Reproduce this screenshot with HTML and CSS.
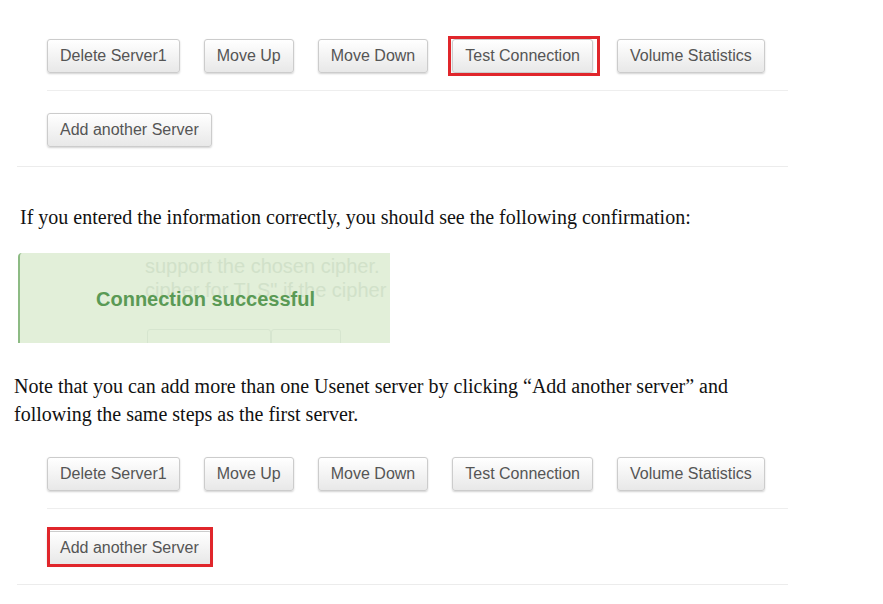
FILE: index.html
```html
<!DOCTYPE html>
<html lang="en">
<head>
    <meta charset="UTF-8">
    <meta name="viewport" content="width=device-width, initial-scale=1.0">
    <title>Add a Usenet server</title>
    <link rel="stylesheet" href="styles.css">
</head>
<body>
    <div class="server-form first">
        <div class="button-row">
            <button class="btn">Delete Server1</button>
            <button class="btn">Move Up</button>
            <button class="btn">Move Down</button>
            <button class="btn marked mark-test">Test Connection</button>
            <button class="btn">Volume Statistics</button>
        </div>
        <div class="add-row">
            <button class="btn">Add another Server</button>
        </div>
    </div>

    <p class="text intro">If you entered the information correctly, you should see the following confirmation:</p>

    <div class="shot">
        <div class="shot-behind">
            <div class="ghost-text">support the chosen cipher.<br>cipher for TLS" if the cipher</div>
            <div class="ghost-boxes">
                <span class="ghost-box wide"></span>
                <span class="ghost-box"></span>
            </div>
        </div>
        <div class="shot-alert">Connection successful</div>
    </div>

    <p class="text note">Note that you can add more than one Usenet server by clicking “Add another server” and following the same steps as the first server.</p>

    <div class="server-form second">
        <div class="button-row">
            <button class="btn">Delete Server1</button>
            <button class="btn">Move Up</button>
            <button class="btn">Move Down</button>
            <button class="btn">Test Connection</button>
            <button class="btn">Volume Statistics</button>
        </div>
        <div class="add-row">
            <button class="btn marked mark-add">Add another Server</button>
        </div>
    </div>
</body>
</html>
```

FILE: styles.css
```css
body {
    margin: 0;
    background: #fff;
    font-family: "Liberation Serif", "Times New Roman", serif;
    color: #111;
}
.server-form {
    margin-left: 17px;
    width: 771px;
    border-bottom: 1px solid #ececec;
}
.server-form.first {
    margin-top: 39px;
}
.server-form.second {
    margin-top: 29px;
}
.button-row {
    display: flex;
    gap: 24px;
    margin-left: 30px;
    padding-bottom: 17px;
    border-bottom: 1px solid #eeeeee;
}
.add-row {
    margin-left: 30px;
    padding: 22px 0 19px;
}
.btn {
    height: 34px;
    padding: 0 12px;
    font-family: "Liberation Sans", Arial, sans-serif;
    font-size: 16px;
    color: #555;
    background: linear-gradient(#ffffff, #e8e8e8);
    border: 1px solid #cccccc;
    border-radius: 3px;
    box-shadow: 0 1px 2px rgba(0, 0, 0, 0.18);
}
/* red annotation frame drawn over the button */
.btn.marked {
    position: relative;
}
.btn.marked::after {
    content: "";
    position: absolute;
    border: 3px solid #e0262b;
}
.mark-test::after {
    inset: -4px -8px -4px -5px;
}
.mark-add::after {
    inset: -5px -2px -3px -1px;
}
.text {
    font-size: 20px;
    line-height: 28px;
    margin: 0;
}
.intro {
    margin: 36px 0 0 20px;
}
.note {
    margin: 29px 0 0 14px;
    width: 714px;
    text-align: justify;
}
.shot {
    display: grid;
    width: 370px;
    height: 90px;
    margin: 22px 0 0 18px;
    overflow: hidden;
    background: #e2efd9;
    border-left: 2px solid #8dbb84;
    border-top-left-radius: 4px;
    font-family: "Liberation Sans", Arial, sans-serif;
}
.shot-behind, .shot-alert {
    grid-area: 1 / 1;
}
.ghost-text {
    margin: 1px 0 0 125px;
    font-size: 20px;
    line-height: 24px;
    color: #d1e1c9;
    white-space: nowrap;
}
.ghost-boxes {
    display: flex;
    margin: 27px 0 0 127px;
}
.ghost-box {
    width: 68px;
    height: 30px;
    border: 1px solid #d6e5cf;
    border-radius: 3px;
}
.ghost-box.wide {
    width: 122px;
}
.shot-alert {
    margin: 35px 0 0 76px;
    font-size: 20px;
    font-weight: bold;
    color: #5a9a55;
}
```
